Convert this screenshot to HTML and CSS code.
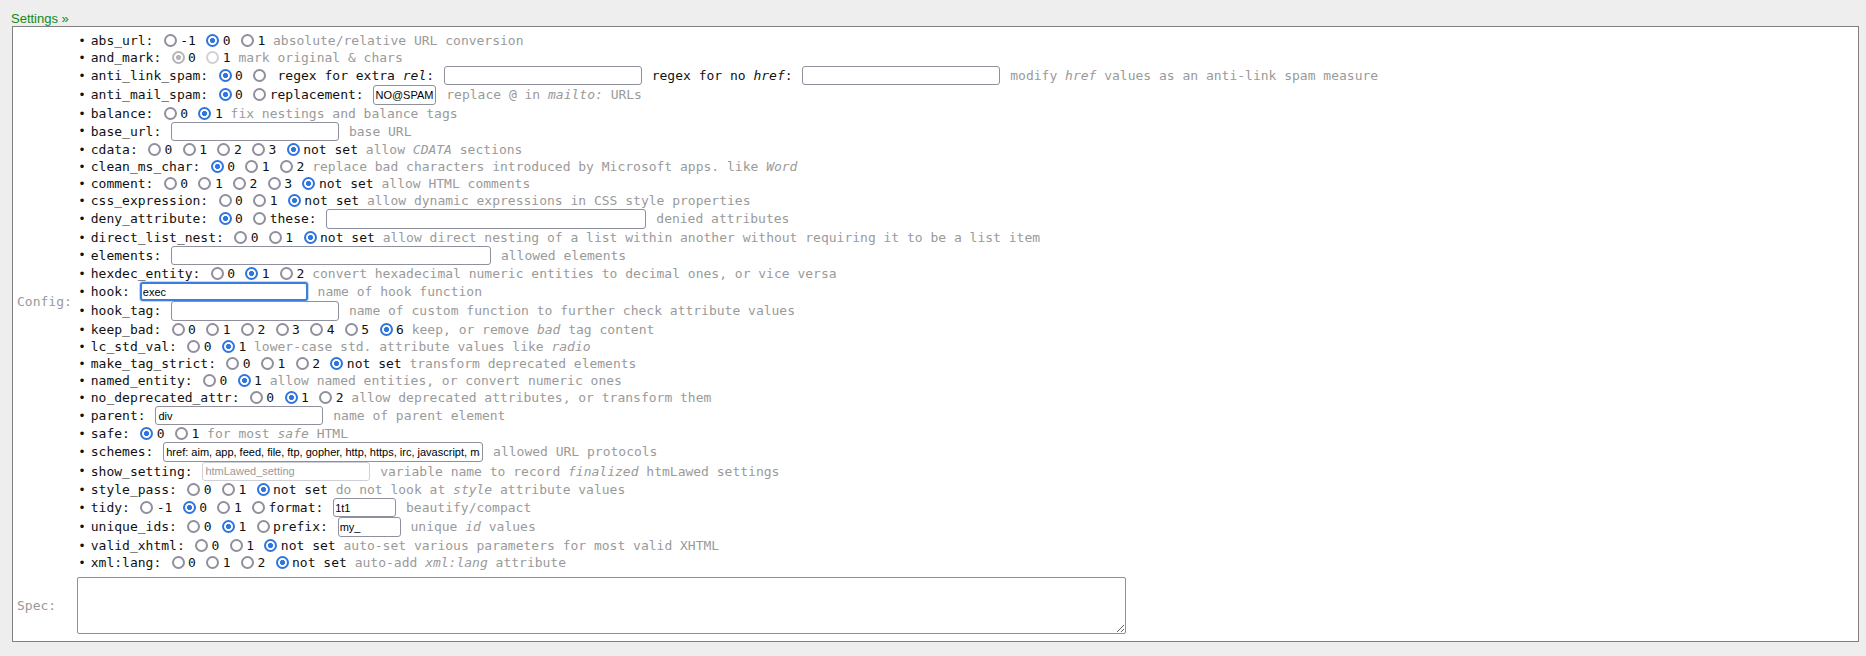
FILE: index.html
```html
<!DOCTYPE html>
<html>
<head>
<meta charset="utf-8">
<title>htmLawed settings</title>
<link rel="stylesheet" href="styles.css">
</head>
<body>
<a class="toggle" href="#">Settings &raquo;</a>
<div class="box">
<table class="cfg">
<tr>
<td class="lbl">Config:</td>
<td>
<ul class="opts">
<li>abs_url: <input type="radio" name="abs_url">-1 <input type="radio" name="abs_url" checked>0 <input type="radio" name="abs_url">1 <span class="desc">absolute/relative URL conversion</span></li>
<li>and_mark: <input type="radio" name="and_mark" checked disabled>0 <input type="radio" name="and_mark" disabled>1 <span class="desc">mark original &amp; chars</span></li>
<li>anti_link_spam: <input type="radio" name="anti_link_spam" checked>0 <input type="radio" name="anti_link_spam"> regex for extra <i>rel</i>: <input type="text" class="w-m"> regex for no <i>href</i>: <input type="text" class="w-m"> <span class="desc">modify <i>href</i> values as an anti-link spam measure</span></li>
<li>anti_mail_spam: <input type="radio" name="anti_mail_spam" checked>0 <input type="radio" name="anti_mail_spam">replacement: <input type="text" class="w-s" value="NO@SPAM"> <span class="desc">replace @ in <i>mailto:</i> URLs</span></li>
<li>balance: <input type="radio" name="balance">0 <input type="radio" name="balance" checked>1 <span class="desc">fix nestings and balance tags</span></li>
<li>base_url: <input type="text"> <span class="desc">base URL</span></li>
<li>cdata: <input type="radio" name="cdata">0 <input type="radio" name="cdata">1 <input type="radio" name="cdata">2 <input type="radio" name="cdata">3 <input type="radio" name="cdata" checked>not set <span class="desc">allow <i>CDATA</i> sections</span></li>
<li>clean_ms_char: <input type="radio" name="clean_ms_char" checked>0 <input type="radio" name="clean_ms_char">1 <input type="radio" name="clean_ms_char">2 <span class="desc">replace bad characters introduced by Microsoft apps. like <i>Word</i></span></li>
<li>comment: <input type="radio" name="comment">0 <input type="radio" name="comment">1 <input type="radio" name="comment">2 <input type="radio" name="comment">3 <input type="radio" name="comment" checked>not set <span class="desc">allow HTML comments</span></li>
<li>css_expression: <input type="radio" name="css_expression">0 <input type="radio" name="css_expression">1 <input type="radio" name="css_expression" checked>not set <span class="desc">allow dynamic expressions in CSS style properties</span></li>
<li>deny_attribute: <input type="radio" name="deny_attribute" checked>0 <input type="radio" name="deny_attribute">these: <input type="text" class="w-l"> <span class="desc">denied attributes</span></li>
<li>direct_list_nest: <input type="radio" name="direct_list_nest">0 <input type="radio" name="direct_list_nest">1 <input type="radio" name="direct_list_nest" checked>not set <span class="desc">allow direct nesting of a list within another without requiring it to be a list item</span></li>
<li>elements: <input type="text" class="w-l"> <span class="desc">allowed elements</span></li>
<li>hexdec_entity: <input type="radio" name="hexdec_entity">0 <input type="radio" name="hexdec_entity" checked>1 <input type="radio" name="hexdec_entity">2 <span class="desc">convert hexadecimal numeric entities to decimal ones, or vice versa</span></li>
<li>hook: <input type="text" class="focused" value="exec"> <span class="desc">name of hook function</span></li>
<li>hook_tag: <input type="text"> <span class="desc">name of custom function to further check attribute values</span></li>
<li>keep_bad: <input type="radio" name="keep_bad">0 <input type="radio" name="keep_bad">1 <input type="radio" name="keep_bad">2 <input type="radio" name="keep_bad">3 <input type="radio" name="keep_bad">4 <input type="radio" name="keep_bad">5 <input type="radio" name="keep_bad" checked>6 <span class="desc">keep, or remove <i>bad</i> tag content</span></li>
<li>lc_std_val: <input type="radio" name="lc_std_val">0 <input type="radio" name="lc_std_val" checked>1 <span class="desc">lower-case std. attribute values like <i>radio</i></span></li>
<li>make_tag_strict: <input type="radio" name="make_tag_strict">0 <input type="radio" name="make_tag_strict">1 <input type="radio" name="make_tag_strict">2 <input type="radio" name="make_tag_strict" checked>not set <span class="desc">transform deprecated elements</span></li>
<li>named_entity: <input type="radio" name="named_entity">0 <input type="radio" name="named_entity" checked>1 <span class="desc">allow named entities, or convert numeric ones</span></li>
<li>no_deprecated_attr: <input type="radio" name="no_deprecated_attr">0 <input type="radio" name="no_deprecated_attr" checked>1 <input type="radio" name="no_deprecated_attr">2 <span class="desc">allow deprecated attributes, or transform them</span></li>
<li>parent: <input type="text" value="div"> <span class="desc">name of parent element</span></li>
<li>safe: <input type="radio" name="safe" checked>0 <input type="radio" name="safe">1 <span class="desc">for most <i>safe</i> HTML</span></li>
<li>schemes: <input type="text" class="w-l" value="href: aim, app, feed, file, ftp, gopher, http, https, irc, javascript, mailto, news, nntp, sftp, ssh, tel, telnet; *:file, http, https"> <span class="desc">allowed URL protocols</span></li>
<li>show_setting: <input type="text" value="htmLawed_setting" disabled> <span class="desc">variable name to record <i>finalized</i> htmLawed settings</span></li>
<li>style_pass: <input type="radio" name="style_pass">0 <input type="radio" name="style_pass">1 <input type="radio" name="style_pass" checked>not set <span class="desc">do not look at <i>style</i> attribute values</span></li>
<li>tidy: <input type="radio" name="tidy">-1 <input type="radio" name="tidy" checked>0 <input type="radio" name="tidy">1 <input type="radio" name="tidy">format: <input type="text" class="w-s" value="1t1"> <span class="desc">beautify/compact</span></li>
<li>unique_ids: <input type="radio" name="unique_ids">0 <input type="radio" name="unique_ids" checked>1 <input type="radio" name="unique_ids">prefix: <input type="text" class="w-s" value="my_"> <span class="desc">unique <i>id</i> values</span></li>
<li>valid_xhtml: <input type="radio" name="valid_xhtml">0 <input type="radio" name="valid_xhtml">1 <input type="radio" name="valid_xhtml" checked>not set <span class="desc">auto-set various parameters for most valid XHTML</span></li>
<li>xml:lang: <input type="radio" name="xml_lang">0 <input type="radio" name="xml_lang">1 <input type="radio" name="xml_lang">2 <input type="radio" name="xml_lang" checked>not set <span class="desc">auto-add <i>xml:lang</i> attribute</span></li>
</ul>
</td>
</tr>
<tr>
<td class="lbl">Spec:</td>
<td><textarea class="spec"></textarea></td>
</tr>
</table>
</div>
</body>
</html>
```

FILE: styles.css
```css
html {
  background: #eeeeee;
}

body {
  margin: 0;
  padding: 11px 7px 0 11px;
  background: #eeeeee;
  font-family: "Liberation Sans", Arial, sans-serif;
  font-size: 13px;
}

.toggle {
  display: block;
  width: max-content;
  color: #138a13;
  text-decoration: none;
  line-height: 15px;
  height: 15px;
}

.box {
  margin-left: 1px;
  border: 1px solid #808080;
  background: #ffffff;
}

.cfg {
  border-spacing: 2px;
  margin-bottom: 4px;
}

.cfg td {
  padding: 1px;
}

.cfg td.lbl {
  padding: 1px 2px;
  color: #999999;
  font-family: "DejaVu Sans Mono", monospace;
  font-size: 13px;
  vertical-align: middle;
}

.opts {
  margin: 2px 0 2px 0;
  padding-left: 14px;
  font-family: "DejaVu Sans Mono", monospace;
  font-size: 13px;
  color: #111111;
}

.opts li {
  line-height: 17.1px;
  white-space: nowrap;
}

.opts li::marker {
  content: "\2022\2002";
  font-family: "Liberation Sans", Arial, sans-serif;
  font-size: 13px;
}

.desc {
  color: #9a9a9a;
}

/* radio buttons */
.opts input[type="radio"] {
  appearance: none;
  -webkit-appearance: none;
  box-sizing: border-box;
  width: 13px;
  height: 13px;
  margin: 0 3.5px 0 2.5px;
  border: 2px solid #8f8f9d;
  border-radius: 50%;
  background: #ffffff;
  vertical-align: -2px;
}

.opts input[type="radio"]:checked {
  border-color: #2f75e0;
  background: radial-gradient(circle, #2f75e0 0, #2f75e0 2.2px, #ffffff 2.9px);
}

.opts input[type="radio"]:disabled {
  border-color: #d0d0d6;
}

.opts input[type="radio"]:checked:disabled {
  border-color: #b4b4ba;
  background: radial-gradient(circle, #b4b4ba 0, #b4b4ba 2.2px, #ffffff 2.9px);
}

/* text fields */
.opts input[type="text"] {
  appearance: none;
  -webkit-appearance: none;
  box-sizing: border-box;
  width: 168px;
  height: 19.25px;
  margin: 0 2px;
  padding: 0 2px;
  border: 1px solid #8f8f9d;
  border-radius: 3px;
  background: #ffffff;
  color: #000000;
  font-family: "Liberation Sans", Arial, sans-serif;
  font-size: 11px;
}

.opts input[type="text"]:disabled {
  border-color: #cfcfd6;
  color: #9a9a9a;
}

.opts input.w-s {
  width: 63px;
  padding: 0 1px;
}

.opts input.w-m {
  width: 198px;
}

.opts input.w-l {
  width: 320px;
}

.opts input.focused {
  border: 2px solid #3a7ee0;
  padding: 0 1px;
  outline: none;
  box-shadow: 0 0 0 1px #c2d7f6;
}

.spec {
  display: block;
  box-sizing: border-box;
  width: 1049px;
  height: 57px;
  margin: 0;
  border: 1px solid #8f8f9d;
  border-radius: 2px;
  background: #ffffff;
}
```
